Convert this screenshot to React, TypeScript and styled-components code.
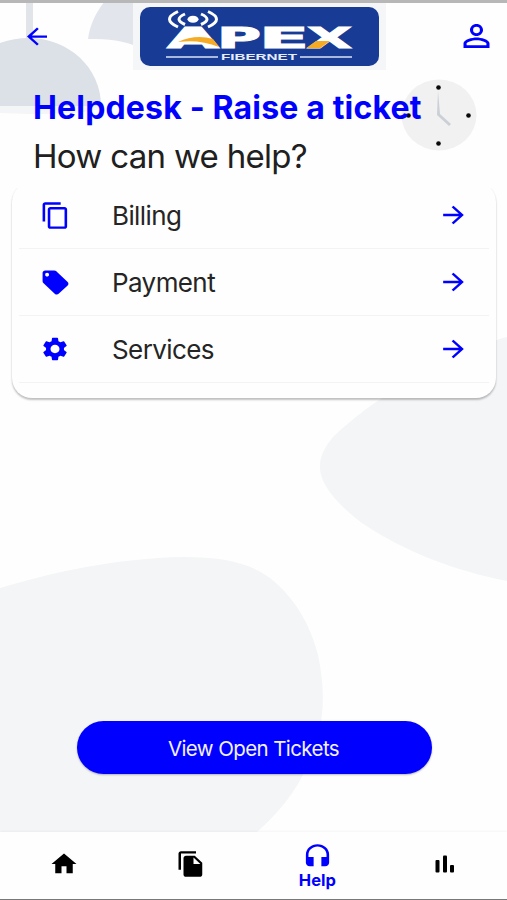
import React from "react";
import styled, { createGlobalStyle } from "styled-components";
import {
  MdArrowBack,
  MdArrowForward,
  MdContentCopy,
  MdFileCopy,
  MdHeadset,
  MdHome,
  MdLocalOffer,
  MdPersonOutline,
  MdSettings,
} from "react-icons/md";

const BLUE = "#0000ff";

const GlobalStyle = createGlobalStyle`
  * { box-sizing: border-box; }
  body { margin: 0; background: #fefefe; font-family: Inter, "Liberation Sans", sans-serif; }
  button { font-family: inherit; border: 0; background: none; padding: 0; }
  h1, h2, ul { margin: 0; padding: 0; }
`;

const Screen = styled.div`
  position: relative;
  isolation: isolate;
  width: 507px;
  height: 900px;
  overflow: hidden;
  display: flex;
  flex-direction: column;
  background: #fefefe;
  border-top: 3px solid #b7b7b7;
  border-bottom: 1px solid #777;
`;

const Backdrop = styled.svg`
  position: absolute;
  top: -3px;
  left: 0;
  z-index: -1;
`;

const Header = styled.header`
  display: grid;
  grid-template-columns: 133px 253px 121px;
  height: 67px;
`;

const IconButton = styled.button<{ $side: "left" | "right" }>`
  display: flex;
  justify-content: ${(p) => (p.$side === "left" ? "flex-start" : "flex-end")};
  align-items: center;
  padding: ${(p) => (p.$side === "left" ? "0 0 0 22px" : "0 11px 1px 0")};
  color: ${BLUE};
`;

const Glyph = styled.span<{ $w: number; $h: number }>`
  display: block;
  width: ${(p) => p.$w}px;
  height: ${(p) => p.$h}px;
  flex: none;
  svg { display: block; width: 100%; height: 100%; }
`;

const Headings = styled.div`
  padding: 14px 0 0 33px;
  height: 115px;
  white-space: nowrap;
`;

const Title = styled.h1`
  width: max-content;
  font-size: 32px;
  line-height: 47px;
  font-weight: 700;
  letter-spacing: 0.17px;
  color: ${BLUE};
`;

const Subtitle = styled.h2`
  width: max-content;
  margin-top: 1px;
  font-size: 33px;
  line-height: 48px;
  font-weight: 400;
  letter-spacing: -0.7px;
  color: #202020;
`;

const Card = styled.ul`
  list-style: none;
  margin: -3px 11px 0 12px;
  height: 216px;
  padding: 0 7px;
  border-radius: 20px;
  background: #fefefe;
  box-shadow: 0 2px 2px rgba(0, 0, 0, 0.24), 0 0 2px rgba(0, 0, 0, 0.06);
  clip-path: inset(6px -6px -6px -6px);
`;

const Row = styled.li`
  display: grid;
  grid-template-columns: 93px 1fr 32px;
  align-items: center;
  height: 67px;
  padding: 0 19px 0 0;
  border-bottom: 1px solid #f3f3f3;
  color: ${BLUE};
`;

const RowIcon = styled.span`
  display: flex;
  justify-content: center;
  width: 72px;
`;

const Label = styled.span`
  width: max-content;
  padding-top: 2px;
  font-size: 26px;
  line-height: 32px;
  letter-spacing: -0.6px;
  color: #252525;
`;

const Action = styled.div`
  flex: 1;
  display: flex;
  justify-content: center;
  align-items: flex-end;
  padding: 0 0 58px 2px;
`;

const TicketsButton = styled.button`
  width: 355px;
  height: 53px;
  padding: 1px 2px 0 0;
  border-radius: 27px;
  background: ${BLUE};
  color: #f2f2ff;
  font-size: 20.5px;
  letter-spacing: -0.6px;
  box-shadow: 0 1px 2px rgba(0, 0, 0, 0.28);
`;

const Nav = styled.nav`
  display: grid;
  grid-template-columns: repeat(4, 1fr);
  height: 67px;
  background: #fefefe;
  box-shadow: 0 -1px 2px rgba(0, 0, 0, 0.04);
`;

const NavItem = styled.button<{ $active?: boolean }>`
  display: flex;
  flex-direction: column;
  align-items: center;
  justify-content: center;
  padding: ${(p) => (p.$active ? "2px 0 0 1px" : "0 0 3px 2px")};
  color: ${(p) => (p.$active ? BLUE : "#000")};
`;

const NavLabel = styled.span`
  font-size: 16.5px;
  line-height: 19px;
  font-weight: 700;
`;

type Shape = React.ComponentType<{ preserveAspectRatio?: string }>;
type IconProps = { icon: Shape; w: number; h: number };

const Icon = ({ icon: Drawing, w, h }: IconProps) => (
  <Glyph $w={w} $h={h}>
    <Drawing preserveAspectRatio="none" />
  </Glyph>
);

const UsageBars: Shape = () => (
  <svg viewBox="0 0 20 18" fill="currentColor">
    <rect x="0.5" y="5" width="4" height="12.5" rx="1" />
    <rect x="8" y="0.5" width="4" height="17" rx="1" />
    <rect x="15" y="10" width="4" height="7.5" rx="1" />
  </svg>
);

const Scenery = () => (
  <Backdrop width="507" height="900" viewBox="0 0 507 900">
    <path d="M0 106H101C101 112 70 114 30 114L0 113Z" fill="#f3f5f6" />
    <rect x="26" width="7" height="42" fill="#e1e5ea" />
    <path d="M0 43C52 25 101 59 101 106H0Z" fill="#dce1e7" />
    <path d="M88 39C90 23 98 9 106 0H140V48C124 40 108 39 88 39Z" fill="#e2e6ec" />
    <path d="M507 337C475 345 455 362 428 376C394 386 360 412 333 437C325 447 320 456 320 466C319 484 338 505 362 523C405 552 456 571 507 581Z" fill="#f3f5f6" />
    <path d="M0 588C50 573 116 558 184 557C221 557 248 562 270 578C293 596 310 623 318 655C324 684 325 709 318 735C307 780 282 810 257 832H0Z" fill="#f3f5f6" />
    <ellipse cx="439" cy="115" rx="37.5" ry="35.5" fill="#f1f1f1" />
    <path d="M438 91L437 115L449 126L451 124L440 114Z" fill="#cbd0d7" />
    {[[438.5, 87.5], [468.5, 115.5], [438.5, 143.5], [408.5, 115.5]].map(([x, y]) => (
      <circle key={`${x}-${y}`} cx={x} cy={y} r="2.3" fill="#090909" />
    ))}
  </Backdrop>
);

const LETTERS = [
  { char: "A", x: 34, w: 52 },
  { char: "P", x: 84, w: 44 },
  { char: "E", x: 126, w: 50 },
  { char: "X", x: 174, w: 45 },
];

const Logo = () => (
  <svg width="253" height="67" viewBox="0 0 253 67" role="img" aria-label="Apex Fibernet">
    <rect width="253" height="67" fill="#f5f6f8" />
    <rect x="7" y="4" width="239" height="59" rx="10" fill="#183c96" />
    <ellipse cx="60" cy="16.3" rx="5.5" ry="3.5" fill="#fff" />
    <g fill="none" stroke="#fff" strokeWidth="3">
      <path d="M52 11Q40 16.3 52 21.5M68 11Q80 16.3 68 21.5" />
      <path d="M45 8.5Q28 16 45 24M75 8.5Q92 16 75 24" />
    </g>
    <g fill="#fff" stroke="#fff" strokeWidth="1" fontFamily="DejaVu Sans" fontWeight="700" fontSize="28">
      {LETTERS.map(({ char, x, w }) => (
        <text key={char} x={x} y="44.5" textLength={w} lengthAdjust="spacingAndGlyphs">
          {char}
        </text>
      ))}
    </g>
    <path d="M60 26L48 36H72Z" fill="#fff" />
    <path d="M45 39Q62 31 80 36L86 44Q66 36 45 39Z" fill="#f6ab25" />
    <path d="M173 45.3L183 38H197L187 45.3Z" fill="#f6ab25" />
    <path d="M33 54H85M167 54H219" stroke="#d9e2f5" strokeWidth="1.5" />
    <text x="88" y="57" fill="#e6edff" fontFamily="Liberation Sans" fontWeight="700" fontSize="9.5" textLength="76" lengthAdjust="spacingAndGlyphs">
      FIBERNET
    </text>
  </svg>
);

const topics: (IconProps & { label: string })[] = [
  { label: "Billing", icon: MdContentCopy, w: 31, h: 29 },
  { label: "Payment", icon: MdLocalOffer, w: 31, h: 29 },
  { label: "Services", icon: MdSettings, w: 30, h: 28 },
];

export default function App() {
  return (
    <>
      <GlobalStyle />
      <Screen>
        <Scenery />
        <Header>
          <IconButton $side="left" aria-label="Back">
            <Icon icon={MdArrowBack} w={30} h={27} />
          </IconButton>
          <Logo />
          <IconButton $side="right" aria-label="Profile">
            <Icon icon={MdPersonOutline} w={39} h={36} />
          </IconButton>
        </Header>
        <Headings>
          <Title>Helpdesk - Raise a ticket</Title>
          <Subtitle>How can we help?</Subtitle>
        </Headings>
        <Card>
          {topics.map(({ label, icon, w, h }) => (
            <Row key={label}>
              <RowIcon>
                <Icon icon={icon} w={w} h={h} />
              </RowIcon>
              <Label>{label}</Label>
              <Icon icon={MdArrowForward} w={31} h={28} />
            </Row>
          ))}
        </Card>
        <Action>
          <TicketsButton>View Open Tickets</TicketsButton>
        </Action>
        <Nav>
          <NavItem aria-label="Home">
            <Icon icon={MdHome} w={30} h={28} />
          </NavItem>
          <NavItem aria-label="Documents">
            <Icon icon={MdFileCopy} w={30} h={28} />
          </NavItem>
          <NavItem $active>
            <Icon icon={MdHeadset} w={31} h={28} />
            <NavLabel>Help</NavLabel>
          </NavItem>
          <NavItem aria-label="Usage">
            <Icon icon={UsageBars} w={20} h={18} />
          </NavItem>
        </Nav>
      </Screen>
    </>
  );
}
